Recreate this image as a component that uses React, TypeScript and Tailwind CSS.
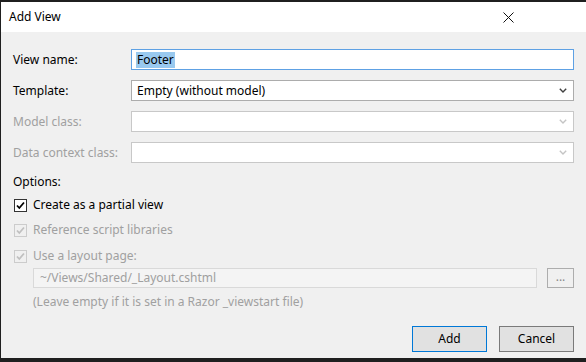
import * as React from "react";

const font = { fontFamily: '"Noto Sans", "Open Sans", sans-serif' };

function Chevron({ disabled }: { disabled?: boolean }) {
  return (
    <svg width="8" height="5" viewBox="0 0 8 5" className="shrink-0">
      <polyline
        points="0.8,0.8 4,4 7.2,0.8"
        fill="none"
        stroke={disabled ? "#c4c4c4" : "#404040"}
        strokeWidth="1.4"
      />
    </svg>
  );
}

function Check({ disabled }: { disabled?: boolean }) {
  return (
    <span
      className={
        disabled
          ? "w-[13px] h-[13px] border border-[#cccccc] bg-[#f0f0f0] flex items-center justify-center shrink-0"
          : "w-[13px] h-[13px] border border-[#333333] bg-white flex items-center justify-center shrink-0"
      }
    >
      <svg width="11" height="11" viewBox="0 0 11 11">
        <polyline
          points="2,5.5 4.3,8 9,2.5"
          fill="none"
          stroke={disabled ? "#c0c0c0" : "#000000"}
          strokeWidth="1.8"
        />
      </svg>
    </span>
  );
}

function Row({
  label,
  disabled,
  children,
}: {
  label: string;
  disabled?: boolean;
  children: React.ReactNode;
}) {
  return (
    <div className="flex items-center h-[21px]">
      <span
        className={
          disabled ? "w-[118px] text-[#a0a0a0]" : "w-[118px] text-black"
        }
      >
        {label}
      </span>
      {children}
    </div>
  );
}

export default function App() {
  return (
    <div
      className="w-[586px] h-[362px] bg-[#1f1f1f] pt-[2px] pl-[1px] pb-[4px] text-[12px] leading-[16px]"
      style={font}
    >
      <div className="h-full flex flex-col bg-[#f0f0f0]">
        {/* title bar */}
        <div className="h-[30px] bg-white flex items-center justify-between pl-[8px] pr-[72px] shrink-0">
          <span className="text-[12px] text-black">Add View</span>
          <svg width="11" height="11" viewBox="0 0 11 11">
            <path d="M0.5 0.5 L10.5 10.5 M10.5 0.5 L0.5 10.5" stroke="#111" strokeWidth="1" />
          </svg>
        </div>

        <div className="flex flex-col pl-[12px] pr-[12px] pt-[17px]">
          <div className="flex flex-col gap-[10px]">
            <Row label="View name:">
              <div className="flex-1 h-[21px] border border-[#5ea1e4] bg-white flex items-center pl-[4px]">
                <span className="bg-[#99c9ef] text-black px-[1px]">Footer</span>
              </div>
            </Row>
            <Row label="Template:">
              <div className="flex-1 h-[21px] border border-[#acacac] bg-white flex items-center justify-between pl-[5px] pr-[6px]">
                <span className="text-black">Empty (without model)</span>
                <Chevron />
              </div>
            </Row>
            <Row label="Model class:" disabled>
              <div className="flex-1 h-[21px] border border-[#c8c8c8] bg-white flex items-center justify-end pr-[6px]">
                <Chevron disabled />
              </div>
            </Row>
            <Row label="Data context class:" disabled>
              <div className="flex-1 h-[21px] border border-[#c8c8c8] bg-white flex items-center justify-end pr-[6px]">
                <Chevron disabled />
              </div>
            </Row>
          </div>

          <div className="mt-[11px] text-black">Options:</div>

          <div className="mt-[7px] flex items-center gap-[6px] pl-[1px] h-[16px]">
            <Check />
            <span className="text-black">Create as a partial view</span>
          </div>
          <div className="mt-[9px] flex items-center gap-[6px] pl-[1px] h-[16px]">
            <Check disabled />
            <span className="text-[#a0a0a0]">Reference script libraries</span>
          </div>
          <div className="mt-[10px] flex items-center gap-[6px] pl-[1px] h-[16px]">
            <Check disabled />
            <span className="text-[#a0a0a0]">Use a layout page:</span>
          </div>

          <div className="mt-[4px] pl-[20px] flex items-center gap-[10px]">
            <div className="flex-1 h-[20px] border border-[#d9d9d9] bg-[#f4f4f4] flex items-center pl-[6px]">
              <span className="text-[#a0a0a0]">~/Views/Shared/_Layout.cshtml</span>
            </div>
            <div className="w-[27px] h-[20px] border border-[#adadad] bg-[#f0f0f0] flex items-center justify-center text-[#888] leading-none pb-[2px]">
              ...
            </div>
          </div>
          <div className="pl-[20px] mt-[6px] text-[#a0a0a0]">
            (Leave empty if it is set in a Razor _viewstart file)
          </div>

          <div className="mt-[16px] flex justify-end gap-[12px]">
            <button className="w-[75px] h-[26px] border border-[#0078d7] bg-[#e1e1e1] text-black">
              Add
            </button>
            <button className="w-[75px] h-[26px] border border-[#7a7a7a] bg-[#e1e1e1] text-black">
              Cancel
            </button>
          </div>
        </div>
      </div>
    </div>
  );
}
